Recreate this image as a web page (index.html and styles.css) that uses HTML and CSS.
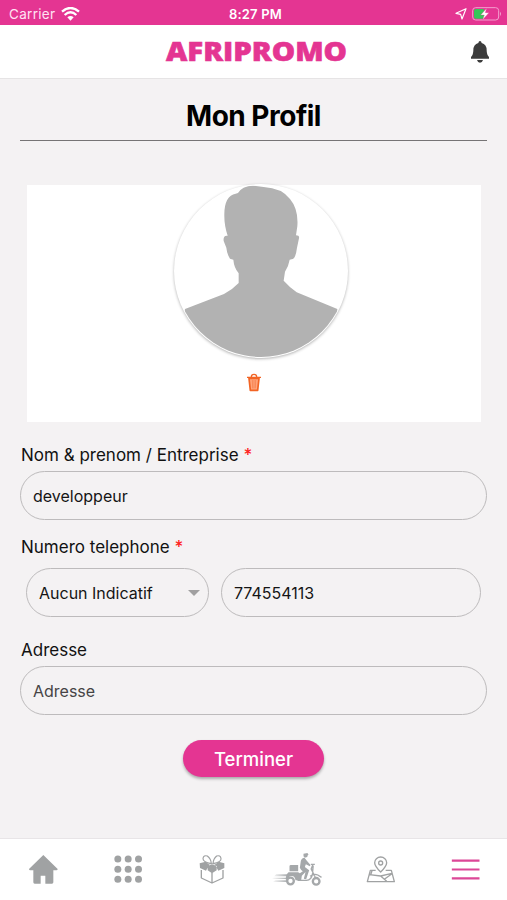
FILE: index.html
```html
<!DOCTYPE html>
<html lang="fr">
<head>
<meta charset="utf-8">
<title>Afripromo</title>
<link rel="stylesheet" href="styles.css">
</head>
<body>
<div class="app">
  <div class="status">
    <div class="status-left"><span class="carrier">Carrier</span>
      <svg width="19" height="14" viewBox="0 0 57 42" fill="none" stroke="#fff"><path d="M3 14Q28.500-8 54 14" stroke-width="7"/><path d="M11 24Q28.500 8 46 24" stroke-width="7"/><path d="M19 31Q28.500 23 38 31L28.500 41Z" fill="#fff" stroke="none"/></svg>
    </div>
    <span class="time">8:27 PM</span>
    <svg class="status-right" width="48" height="18" viewBox="0 0 144 54"><path d="M6 25L36 11L24 42L20 28Z" fill="none" stroke="#fff" stroke-width="3.500" stroke-linejoin="round"/><rect x="56" y="8" width="78" height="37" rx="9" fill="none" stroke="#f3a0cf" stroke-width="3"/><path d="M138 20Q144 26 138 33Z" fill="#f3a0cf"/><rect x="60" y="12" width="31" height="29" rx="5" fill="#35c759"/><path d="M98 10L80 30H91L86 44L105 23H94Z" fill="#fff" stroke="#e43592" stroke-width="1"/></svg>
  </div>
  <header class="header">
    <span></span>
    <svg class="logo" width="184" height="28" viewBox="0 0 184 28"><text x="1" y="23" textLength="181" lengthAdjust="spacingAndGlyphs">AFRIPROMO</text></svg>
    <svg class="bell" width="20" height="24" viewBox="0 0 60 72"><path d="M30 3Q34 3 35 9Q50 13 50 31Q50 45 57 51V56H3V51Q10 45 10 31Q10 13 25 9Q26 3 30 3ZM21 60H39Q37 68 30 68Q23 68 21 60Z" fill="#3c3c3c"/></svg>
  </header>
  <main class="main">
    <h1 class="title">Mon Profil</h1>
    <section class="card">
      <svg class="avatar" width="174" height="174" viewBox="40 29 522 522">
        <defs><clipPath id="disc"><circle cx="301" cy="290" r="258"/></clipPath></defs>
        <path clip-path="url(#disc)" fill="#b2b2b2" d="M201 184Q190 153 191 118Q192 64 225 58L232 56Q244 35 276 34L309 38Q363 41 388 74Q414 105 410 156L406 183Q417 183 415 192L409 220Q405 251 396 254L387 256Q384 275 373 292L369 319Q388 340 408 354L530 404V560H40L73 404L190 359Q214 347 234 326V297Q220 280 218 256L208 253Q199 240 197 220L189 200Q187 183 199 184Z"/>
      </svg>
      <svg class="trash" width="16" height="20" viewBox="0 0 48 60"><path d="M9 16H39L35 52H13Z" fill="#ffa47b" stroke="#f26424" stroke-width="5" stroke-linejoin="round"/><path d="M3 13H45M16 11Q16 4 24 4T32 11" fill="none" stroke="#f26424" stroke-width="4"/><path d="M19 21L20 46M24 21V46M29 21L28 46" stroke="#f47c48" stroke-width="2"/></svg>
    </section>
    <form class="form">
      <div class="label label-name"><span>Nom &amp; prenom / Entreprise</span> <b>*</b></div>
      <div class="field">developpeur</div>
      <div class="label label-phone"><span>Numero telephone</span> <b>*</b></div>
      <div class="phone">
        <div class="field select"><span>Aucun Indicatif</span><i class="caret"></i></div>
        <div class="field number">774554113</div>
      </div>
      <div class="label label-address"><span>Adresse</span></div>
      <div class="field placeholder">Adresse</div>
      <button class="submit" type="button">Terminer</button>
    </form>
  </main>
  <nav class="nav">
    <svg viewBox="0 27 253.500 183"><path d="M130 75L173 117Q173 121 169 121H160V157Q160 161 156 161H136V137H122V161H104Q100 161 100 157V121H91Q87 121 87 117Z" fill="#a0a2a3"/></svg>
    <svg viewBox="253.500 27 253.500 183"><g fill="#a0a2a3"><circle cx="352" cy="87" r="10.500"/><circle cx="383" cy="87" r="10.500"/><circle cx="414" cy="87" r="10.500"/><circle cx="352" cy="118" r="10.500"/><circle cx="383" cy="118" r="10.500"/><circle cx="414" cy="118" r="10.500"/><circle cx="352" cy="148" r="10.500"/><circle cx="383" cy="148" r="10.500"/><circle cx="414" cy="148" r="10.500"/></g></svg>
    <svg viewBox="507 27 253.500 183"><g fill="none" stroke="#a0a2a3" stroke-width="4" stroke-linejoin="round"><path d="M604 120V144L636 159L669 144V120M636 128V159"/><path d="M634 101Q608 96 609 85Q611 75 622 78Q633 86 634 101ZM639 101Q665 96 663 85Q661 75 650 78Q640 86 639 101Z" stroke-width="3.500"/></g><path d="M599 100L617 95L628 104L618 122L600 114ZM673 100L656 95L645 104L655 122L673 114ZM623 108L636 103L650 108V121L636 130L623 121Z" fill="#a0a2a3"/><path d="M616 105L636 100L657 105" fill="none" stroke="#a0a2a3" stroke-width="2"/></svg>
    <svg viewBox="1.500 27 253.500 183"><defs><linearGradient id="speed"><stop stop-color="#a5a8aa" stop-opacity="0"/><stop offset="1" stop-color="#a5a8aa"/></linearGradient></defs><path d="M68 133H105V139H62ZM60 143H105V147H54ZM65 151H101V156H58Z" fill="url(#speed)"/><g fill="#a5a8aa"><path d="M112 105H134V124H108V109Q108 105 112 105ZM105 127H134L139 130L148 124L143 120L139 113L142 93Q144 84 153 83L160 92L171 105L169 109L157 103L154 111L167 121L158 148L151 146L156 126L145 137L143 151H126Q124 135 109 139L101 149H97Q96 136 105 127Z"/><path d="M150 71L162 69L164 73L161 81L154 83L150 79Z"/></g><g fill="none" stroke="#a5a8aa"><circle cx="111" cy="153" r="10" stroke-width="7"/><circle cx="188" cy="154" r="10" stroke-width="7"/><path d="M172 103H184M178 104L173 117L185 141M179 107L177 131Q174 151 159 151H132M170 139Q181 130 193 135L204 142" stroke-width="4"/></g></svg>
    <svg viewBox="255 27 253.500 183"><g fill="none" stroke="#a0a2a3" stroke-width="4" stroke-linejoin="round"><path d="M383 126Q365 108 365 98A18 17 0 0 1 401 98Q401 108 383 126Z"/><circle cx="383" cy="99" r="6"/><path d="M368 121H352L343 155H424L415 121H398M349 134L383 138L417 130M383 138L401 154M417 131L395 147M357 122L353 134"/></g></svg>
    <svg viewBox="508.500 27 253.500 183"><path d="M595 92H678M595 118.500H678M595 145H678" stroke="#dc4797" stroke-width="6.500"/></svg>
  </nav>
</div>
</body>
</html>
```
FILE: styles.css
```css
* { box-sizing: border-box; }
body { margin: 0; font-family: Inter, "Liberation Sans", sans-serif; color: #111; background: #f4f2f3; }
svg { display: block; flex: none; }
.app { width: 507px; height: 900px; display: flex; flex-direction: column; overflow: hidden; }
.status { height: 25px; flex: none; background: #e43592; color: #fff; display: grid; grid-template-columns: 1fr auto 1fr; align-items: center; padding: 2px 5px 0 9px; font-size: 13.500px; }
.status-left { display: flex; align-items: center; gap: 6px; color: #ffe3f2; letter-spacing: 0.300px; }
.time { font-weight: 600; font-size: 13px; letter-spacing: 0.200px; }
.status-right { justify-self: end; }
.header { height: 54px; flex: none; background: #fff; border-bottom: 1px solid #e6e4e5; display: grid; grid-template-columns: 1fr auto 1fr; align-items: center; padding: 0 17px 0 24px; }
.logo text { font-family: "Open Sans", sans-serif; font-weight: 800; font-size: 26px; fill: #e43592; stroke: #e43592; stroke-width: 0.600px; }
.logo { margin-left: 0; }
.bell { justify-self: end; }
.main { flex: 1; padding: 0 20px; }
.title { margin: 0; height: 62px; padding-top: 20px; border-bottom: 1px solid #767475; text-align: center; font-size: 28px; line-height: 35px; font-weight: 700; letter-spacing: -0.500px; color: #000; }
.card { height: 237px; margin: 44px 6px 0 7px; background: #fff; display: flex; flex-direction: column; align-items: center; }
.avatar { margin: -1px 0 0 13px; border-radius: 50%; background: #fff; box-shadow: 0 1px 3px rgba(0, 0, 0, 0.3); }
.trash { margin-top: 15px; }
.form { display: flex; flex-direction: column; }
.label { height: 24px; line-height: 24px; font-size: 17px; padding-left: 1px; white-space: pre; }
.label b { color: #f22; font-weight: 500; }
.label-name { margin-top: 21px; }
.label-phone { margin-top: 15px; }
.label-address { margin-top: 21px; }
.field { height: 49px; margin-top: 4px; border: 1px solid #bdbbbc; border-radius: 25px; padding: 0 12px; display: flex; align-items: center; font-size: 16px; color: #151515; }
.placeholder { color: #464445; }
.phone { display: flex; gap: 12px; padding: 0 6px; margin-top: 5px; }
.select { width: 183px; justify-content: space-between; padding-right: 8px; }
.number { flex: 1; }
.caret { border: 6px solid transparent; border-top-color: #a09fa0; border-bottom: 0; }
.submit { align-self: center; width: 141px; height: 37px; margin-top: 25px; border: 0; border-radius: 19px; background: #e43592; color: #fff; font: 500 18.500px Inter, sans-serif; box-shadow: 0 2px 3px rgba(0, 0, 0, 0.3); }
.nav { height: 62px; flex: none; background: #fff; border-top: 1px solid #e8e5e7; display: grid; grid-template-columns: repeat(6, 1fr); }
.nav svg { width: 84.500px; height: 61px; }
```
